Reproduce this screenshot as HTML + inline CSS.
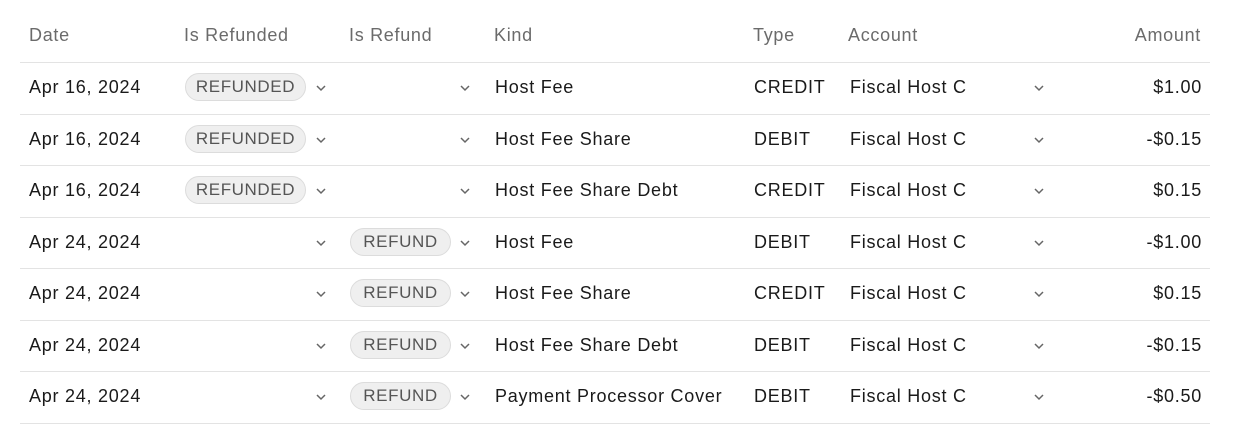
<!DOCTYPE html>
<html><head><style>
body{margin:0;width:1233px;height:425px;background:#fff;font-family:"Liberation Sans",sans-serif;overflow:hidden;position:relative}
.h{position:absolute;top:25px;font-size:18px;color:#6b6b6b;letter-spacing:0.7px}
.r{position:absolute;left:20px;width:1190px;height:51px;border-top:1px solid #e3e3e3}
.r span{position:absolute;top:14px;font-size:18px;color:#1a1a1a;white-space:nowrap;letter-spacing:0.75px}
.b{position:absolute;top:10px;height:28px;border:1px solid #dcdcdc;background:#efefef;border-radius:15px;font-size:17px;color:#555;line-height:26px;text-align:center;box-sizing:border-box;letter-spacing:0.6px}
.c{position:absolute;top:21px;width:12px;height:8px}
.c svg{display:block}
</style></head><body>
<div class="h" style="left:29px">Date</div>
<div class="h" style="left:184px">Is Refunded</div>
<div class="h" style="left:349px">Is Refund</div>
<div class="h" style="left:494px">Kind</div>
<div class="h" style="left:753px">Type</div>
<div class="h" style="left:848px">Account</div>
<div class="h" style="right:32px">Amount</div>
<div id="rows"></div>
<script>
var d=[["Apr 16, 2024",1,0,"Host Fee","CREDIT","$1.00"],["Apr 16, 2024",1,0,"Host Fee Share","DEBIT","-$0.15"],["Apr 16, 2024",1,0,"Host Fee Share Debt","CREDIT","$0.15"],["Apr 24, 2024",0,1,"Host Fee","DEBIT","-$1.00"],["Apr 24, 2024",0,1,"Host Fee Share","CREDIT","$0.15"],["Apr 24, 2024",0,1,"Host Fee Share Debt","DEBIT","-$0.15"],["Apr 24, 2024",0,1,"Payment Processor Cover","DEBIT","-$0.50"]];
var chev='<svg viewBox="0 0 12 8" width="12" height="8"><path d="M2 2l4 4 4-4" fill="none" stroke="#666" stroke-width="1.5"/></svg>';
var h='';
d.forEach(function(r,i){
var top=62+i*51.5;
h+='<div class="r" style="top:'+top+'px'+(i==6?';border-bottom:1px solid #e3e3e3':'')+'">';
h+='<span style="left:9px">'+r[0]+'</span>';
if(r[1])h+='<div class="b" style="left:165px;width:121px">REFUNDED</div>';
h+='<div class="c" style="left:295px">'+chev+'</div>';
if(r[2])h+='<div class="b" style="left:330px;width:101px">REFUND</div>';
h+='<div class="c" style="left:439px">'+chev+'</div>';
h+='<span style="left:475px">'+r[3]+'</span>';
h+='<span style="left:734px">'+r[4]+'</span>';
h+='<span style="left:830px">Fiscal Host C</span>';
h+='<div class="c" style="left:1013px">'+chev+'</div>';
h+='<span style="right:8px">'+r[5]+'</span>';
h+='</div>';});
document.getElementById('rows').innerHTML=h;
</script>
</body></html>
